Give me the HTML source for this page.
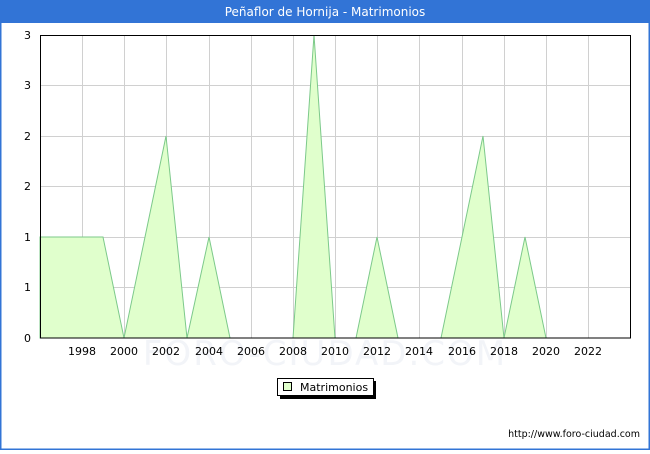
<!DOCTYPE html>
<html><head><style>
body{margin:0;width:650px;height:450px;overflow:hidden;background:#fff;font-family:"DejaVu Sans","Liberation Sans",sans-serif}
</style></head><body>
<svg width="650" height="450" xmlns="http://www.w3.org/2000/svg" font-family="DejaVu Sans, Liberation Sans, sans-serif">
<rect x="0" y="0" width="650" height="450" fill="#fff"/>
<rect x="0.5" y="0.5" width="649" height="449" fill="none" stroke="#3274d6" stroke-width="2"/>
<rect x="0" y="0" width="650" height="23" fill="#3274d6"/>
<text x="325" y="16" text-anchor="middle" fill="#fff" font-size="12">Peñaflor de Hornija - Matrimonios</text>
<text x="325" y="365" text-anchor="middle" fill="#f2f4f8" font-size="34" letter-spacing="2">FORO-CIUDAD.COM</text>
<g stroke="#d0d0d0" stroke-width="1">
<line x1="82.5" y1="35" x2="82.5" y2="338"/><line x1="124.5" y1="35" x2="124.5" y2="338"/><line x1="166.5" y1="35" x2="166.5" y2="338"/><line x1="209.5" y1="35" x2="209.5" y2="338"/><line x1="251.5" y1="35" x2="251.5" y2="338"/><line x1="293.5" y1="35" x2="293.5" y2="338"/><line x1="335.5" y1="35" x2="335.5" y2="338"/><line x1="377.5" y1="35" x2="377.5" y2="338"/><line x1="419.5" y1="35" x2="419.5" y2="338"/><line x1="462.5" y1="35" x2="462.5" y2="338"/><line x1="504.5" y1="35" x2="504.5" y2="338"/><line x1="546.5" y1="35" x2="546.5" y2="338"/><line x1="588.5" y1="35" x2="588.5" y2="338"/>
<line x1="40" y1="85.5" x2="631" y2="85.5"/><line x1="40" y1="136.5" x2="631" y2="136.5"/><line x1="40" y1="186.5" x2="631" y2="186.5"/><line x1="40" y1="237.5" x2="631" y2="237.5"/><line x1="40" y1="287.5" x2="631" y2="287.5"/>
</g>
<polygon points="40,237 103,237 124,338 145,237 166,136 187,338 209,237 230,338 293,338 314,35 335,338 356,338 377,237 398,338 441,338 462,237 483,136 504,338 525,237 546,338 40,338" fill="#e0ffcc" stroke="#7cc98a" stroke-width="1"/>
<rect x="40.5" y="35.5" width="590" height="302.5" fill="none" stroke="#000" stroke-width="1"/>
<g font-size="11" fill="#000" text-anchor="end">
<text x="31" y="39">3</text><text x="31" y="89">3</text><text x="31" y="140">2</text><text x="31" y="190">2</text><text x="31" y="241">1</text><text x="31" y="291">1</text><text x="31" y="342">0</text>
</g>
<g font-size="11" fill="#000" text-anchor="middle">
<text x="82" y="355">1998</text><text x="124" y="355">2000</text><text x="166" y="355">2002</text><text x="209" y="355">2004</text><text x="251" y="355">2006</text><text x="293" y="355">2008</text><text x="335" y="355">2010</text><text x="377" y="355">2012</text><text x="419" y="355">2014</text><text x="462" y="355">2016</text><text x="504" y="355">2018</text><text x="546" y="355">2020</text><text x="588" y="355">2022</text>
</g>
<rect x="280" y="381" width="96" height="18" fill="#000"/>
<rect x="277.5" y="378.5" width="96" height="17" fill="#fff" stroke="#000"/>
<rect x="283.5" y="382.5" width="8" height="8" fill="#e0ffcc" stroke="#000"/>
<text x="300" y="391" font-size="11">Matrimonios</text>
<text x="640" y="437" font-size="9.5" text-anchor="end">http://www.foro-ciudad.com</text>
</svg>
</body></html>
